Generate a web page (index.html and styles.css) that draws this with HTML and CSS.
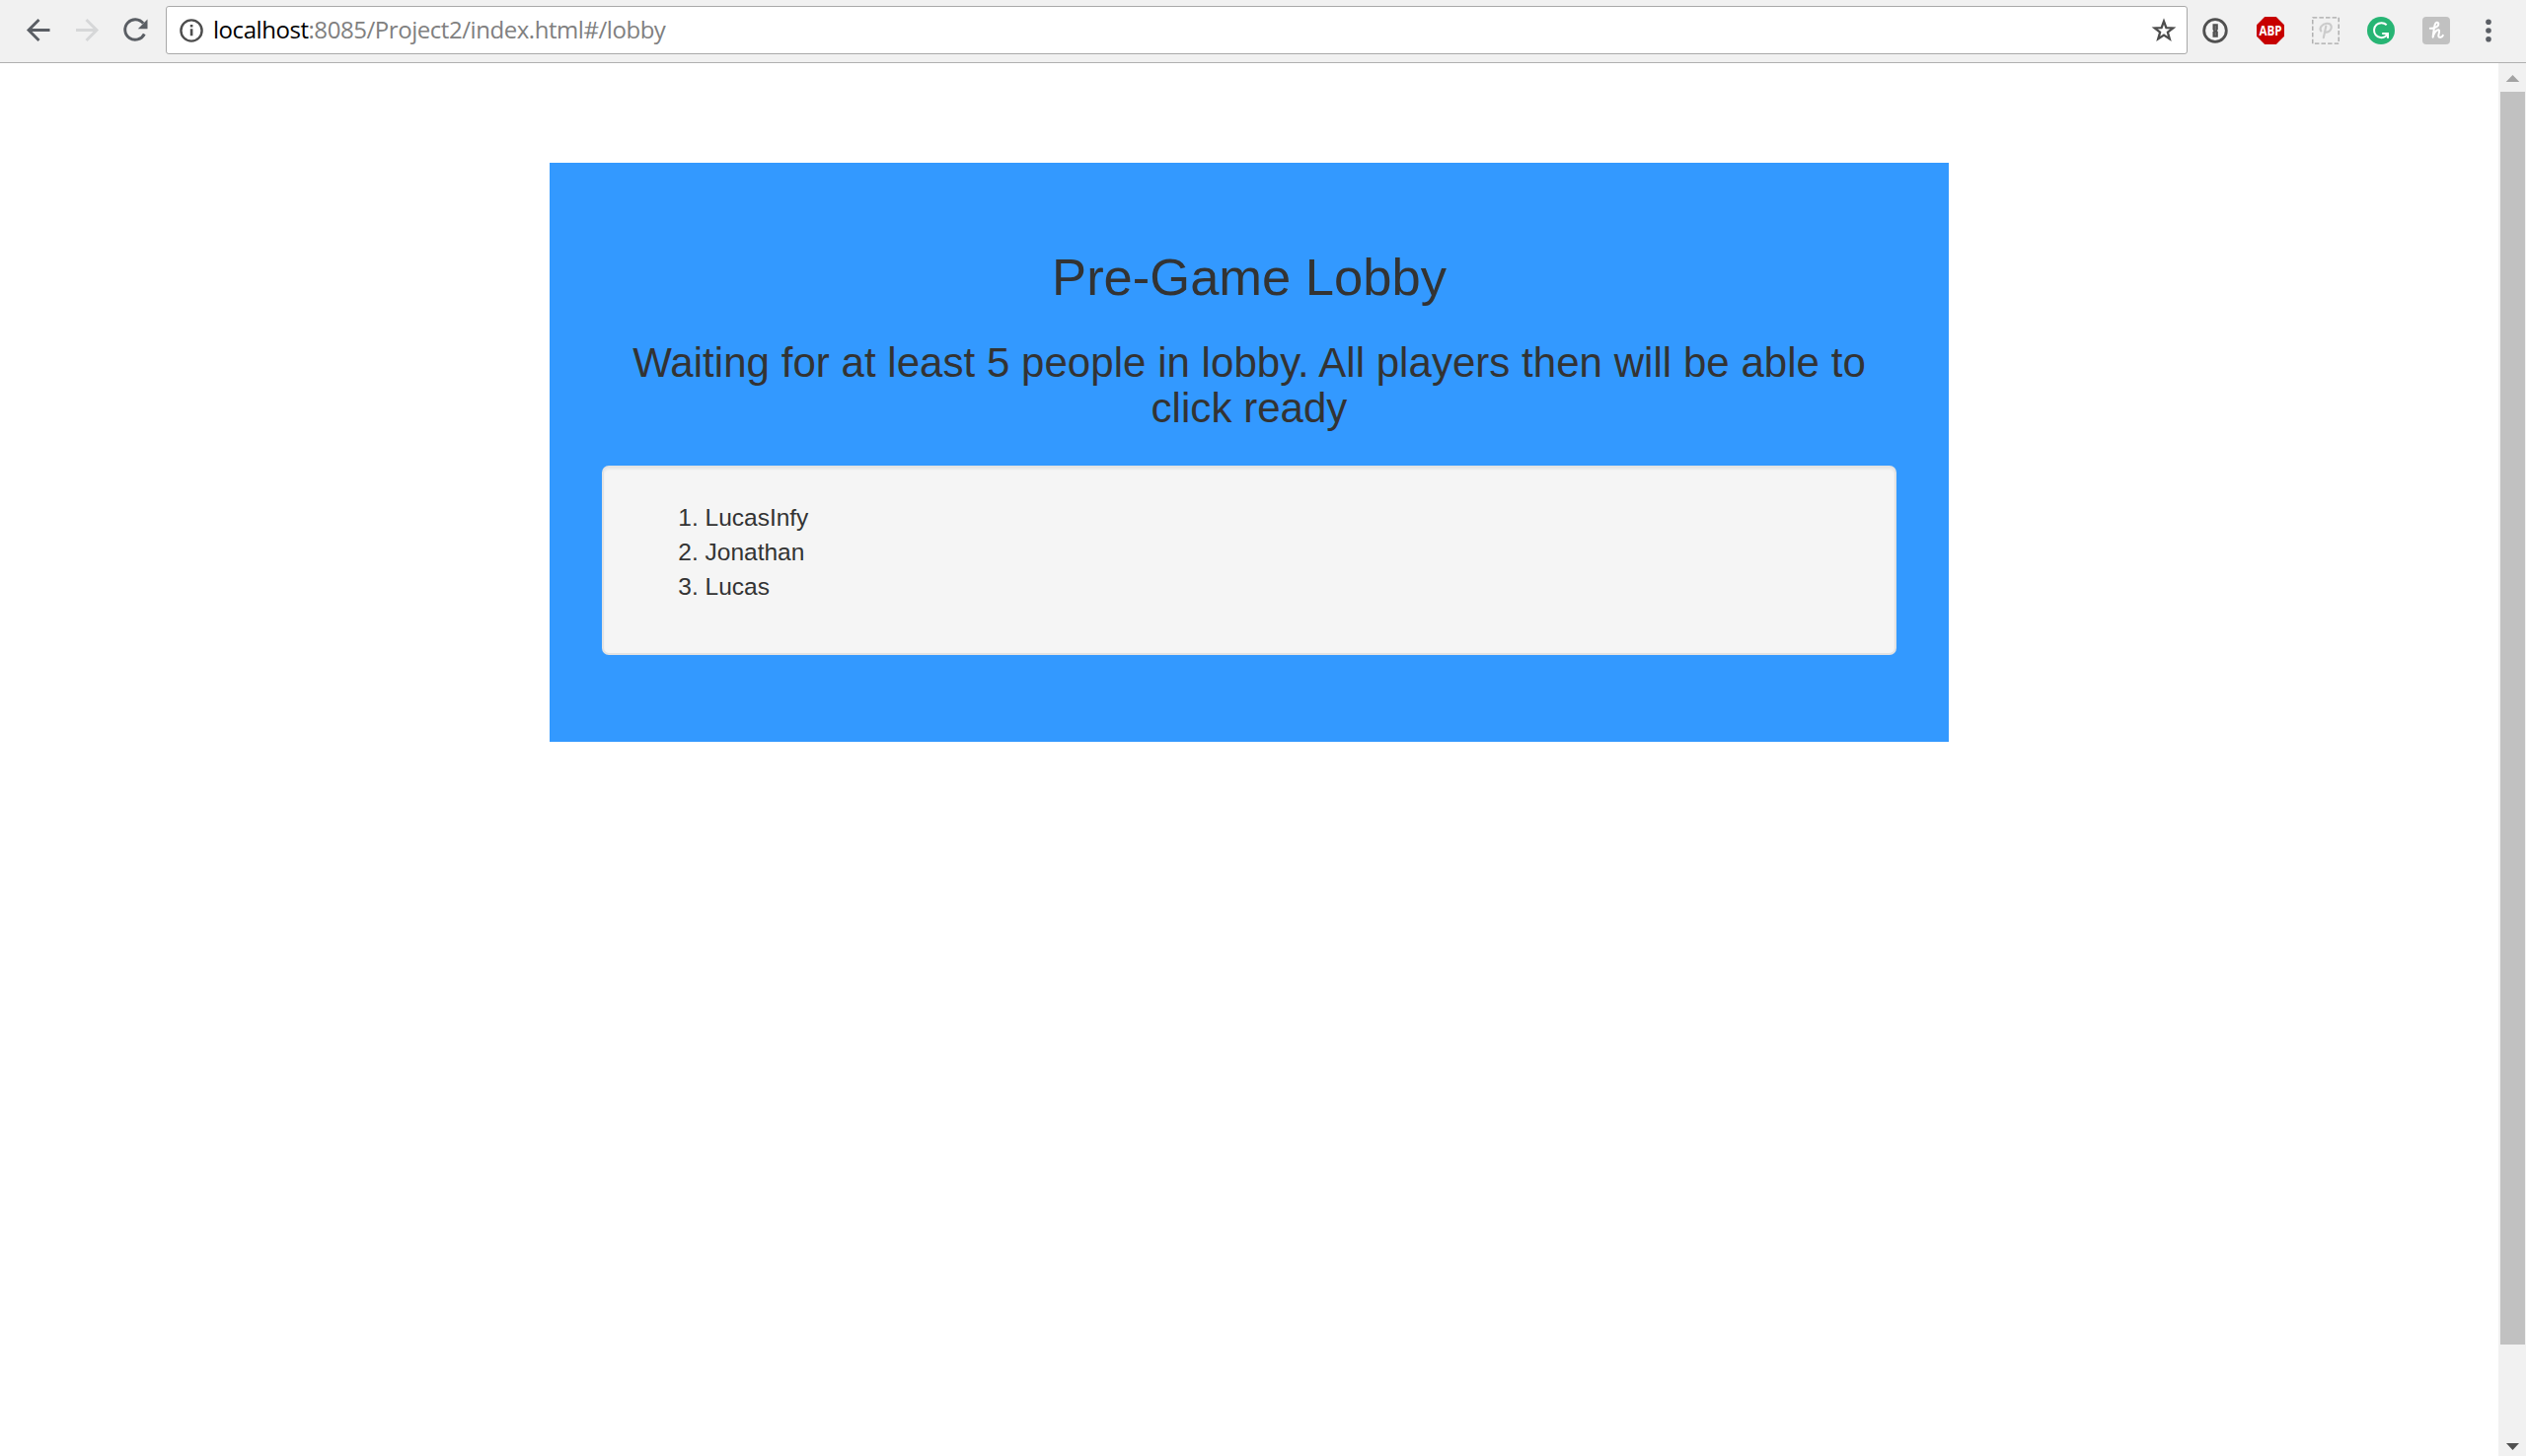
FILE: index.html
```html
<!DOCTYPE html>
<html lang="en">
<head>
<meta charset="utf-8">
<title>Pre-Game Lobby</title>
<link rel="stylesheet" href="styles.css">
</head>
<body>
<header class="toolbar">
  <nav class="nav">
    <svg width="36" height="37" viewBox="0 0 36 37" fill="none" stroke="#5a5e64" stroke-width="2.9"><path d="M29.5 18.5H8M18.5 8L8 18.5L18.5 29"/></svg>
    <svg width="36" height="37" viewBox="0 0 36 37" fill="none" stroke="#d6d7d8" stroke-width="2.9"><path d="M7 18.5H28M17.5 8L28 18.5L17.5 29"/></svg>
    <svg width="36" height="37" viewBox="0 0 36 37" fill="none" stroke="#5a5e64" stroke-width="2.9"><path d="M26.2 11.7A10.3 10.3 0 1 0 27.3 22.5"/><path d="M30.5 7.5V17.3H20.8Z" fill="#5a5e64" stroke="none"/></svg>
  </nav>
  <div class="address">
    <svg width="24" height="24" viewBox="0 0 24 24"><circle cx="12" cy="12" r="10.6" fill="none" stroke="#4d4d4d" stroke-width="2.4"/><path d="M10.8 6h2.6v2.5h-2.6zM10.8 10.3h2.6v7h-2.6z" fill="#4d4d4d"/></svg>
    <div class="url"><span class="host">localhost</span>:8085/Project2/index.html#/lobby</div>
    <svg width="26" height="26" viewBox="0 0 26 26" fill="none" stroke="#4d4d4d" stroke-width="2.3"><path d="M13 3.6L15.4 10.1L22.3 10.4L16.9 14.7L18.8 21.4L13 17.6L7.2 21.4L9.1 14.7L3.7 10.4L10.6 10.1Z"/></svg>
  </div>
  <div class="extensions">
    <svg width="28" height="28" viewBox="0 0 28 28"><circle cx="14" cy="14" r="11.3" fill="#f4f4f4" stroke="#505050" stroke-width="2.8"/><path d="M11.5 7.2H16.8V13L15.8 14L16.8 15V20.8H11.5V15.2L12.5 14.2L11.5 13.2Z" fill="#505050"/><path d="M14.2 9v5M14.2 15.5v3.5" stroke="#858585" stroke-width=".8"/></svg>
    <svg class="badge" width="28" height="28" viewBox="0 0 28 28"><path d="M8.2 0H19.8L28 8.2V19.8L19.8 28H8.2L0 19.8V8.2Z" fill="#c70000"/><text class="abp" transform="translate(14 19.3) scale(.83 1)" text-anchor="middle">ABP</text></svg>
    <svg width="28" height="28" viewBox="0 0 28 28" fill="none"><path d="M.8.8H27.2V27.2H.8Z" stroke="#a6a6a6" stroke-width="1.3" stroke-dasharray="4.5 2.1"/><path d="M9.3 14.5C7 11.5 10.5 7.2 15 6.8C20.5 6.5 20.8 11.5 18 14.2C16.5 15.7 14.5 16 12.8 15M14.3 9.5C13.5 13 12.7 17.5 11.8 21.3" stroke="#cbcbcb" stroke-width="2.1" stroke-linecap="round"/></svg>
    <svg width="28" height="28" viewBox="0 0 28 28" fill="none"><circle cx="14" cy="14" r="14" fill="#27b574"/><path d="M19.7 8.2A7.5 7.5 0 1 0 18.8 19.8L20 17.8M15.2 16.9H21V21.8" stroke="#fff" stroke-width="2"/></svg>
    <svg width="28" height="28" viewBox="0 0 28 28" fill="none"><rect width="28" height="28" rx="4" fill="#c1c1c1"/><path d="M7.8 11.8C11.5 12.2 16.8 9.8 16.3 6.8C15.8 4.9 13.4 5.4 12.6 8.2C11.8 11.5 11.2 16 10.6 20.7C11.6 16.5 14.5 12.6 16.6 13.3C18.3 14.3 15.8 17.8 16.4 19.8C17.2 21.8 19.8 20.6 20.8 18.9" stroke="#fff" stroke-width="2" stroke-linecap="round" stroke-linejoin="round"/></svg>
  </div>
  <svg class="menu" width="28" height="28" viewBox="0 0 28 28" fill="#5a5e64"><circle cx="14" cy="5.3" r="2.8"/><circle cx="14" cy="14" r="2.8"/><circle cx="14" cy="22.7" r="2.8"/></svg>
</header>
<div class="viewport">
  <main class="page">
    <section class="lobby">
      <h2 class="title">Pre-Game Lobby</h2>
      <h3 class="status">Waiting for at least 5 people in lobby. All players then will be able to click ready</h3>
      <div class="well">
        <ol class="players">
          <li>LucasInfy</li>
          <li>Jonathan</li>
          <li>Lucas</li>
        </ol>
      </div>
    </section>
  </main>
  <aside class="scrollbar">
    <svg width="28" height="29" viewBox="0 0 28 29"><path d="M14.5 12L21.3 19H7.7Z" fill="#a3a3a3"/></svg>
    <div class="thumb"></div>
    <svg class="down" width="28" height="29" viewBox="0 0 28 29"><path d="M8 16H21L14.5 23Z" fill="#505050"/></svg>
  </aside>
</div>
</body>
</html>
```
FILE: styles.css
```css
* { box-sizing: border-box; }
body {
  margin: 0;
  height: 1476px;
  display: flex;
  flex-direction: column;
  overflow: hidden;
  background: #fff;
  color: #333;
  font: 24.5px/35px "Liberation Sans", Arial, sans-serif;
}
svg { display: block; flex: none; }
.toolbar {
  height: 64px;
  flex: none;
  display: flex;
  align-items: flex-start;
  padding: 6px 24px 0 21px;
  background: #f1f1f1;
  border-bottom: 1px solid #b0b0b0;
}
.nav {
  height: 49px;
  display: flex;
  align-items: center;
  gap: 13px;
  margin-right: 13px;
}
.address {
  flex: 1;
  height: 49px;
  display: flex;
  align-items: center;
  padding: 0 10px 0 12.5px;
  background: #fff;
  border: 1px solid #a9a9a9;
  border-radius: 3px;
}
.url {
  flex: 1;
  margin-left: 10.5px;
  padding-bottom: 2px;
  font-family: "Open Sans", "Noto Sans", sans-serif;
  font-size: 24px;
  line-height: 34px;
  letter-spacing: -0.45px;
  color: #808080;
  white-space: nowrap;
}
.host { color: #000; }
.extensions {
  display: flex;
  gap: 28px;
  margin: 11px 25px 0 14px;
}
.menu { margin-top: 11px; }
.badge { overflow: visible; }
.abp {
  font: bold 14px "Open Sans", sans-serif;
  fill: #fff;
}
.viewport { flex: 1; display: flex; }
.page { flex: 1; padding-top: 101px; }
.lobby {
  width: 1418px;
  height: 587px;
  margin-left: 557px;
  padding: 87px 53px 0;
  background: #39f;
}
.title, .status { font-weight: 400; text-align: center; }
.title { margin: 0; font-size: 52.5px; line-height: 57.75px; }
.status {
  margin: 35px 0 34.85px;
  font-size: 42px;
  line-height: 46.2px;
  letter-spacing: 0.04px;
}
.well {
  height: 192px;
  padding: 33px;
  background: #f5f5f5;
  border: 2px solid #e3e3e3;
  border-radius: 7px;
  box-shadow: inset 0 2px 2px rgba(0, 0, 0, .05);
}
.players { margin: 0; padding-left: 69.5px; }
.scrollbar {
  width: 28px;
  display: flex;
  flex-direction: column;
  background: #f1f1f1;
}
.thumb {
  width: 25px;
  height: 1270px;
  margin-left: 2px;
  background: #c1c1c1;
}
.down { margin-top: auto; }
```
